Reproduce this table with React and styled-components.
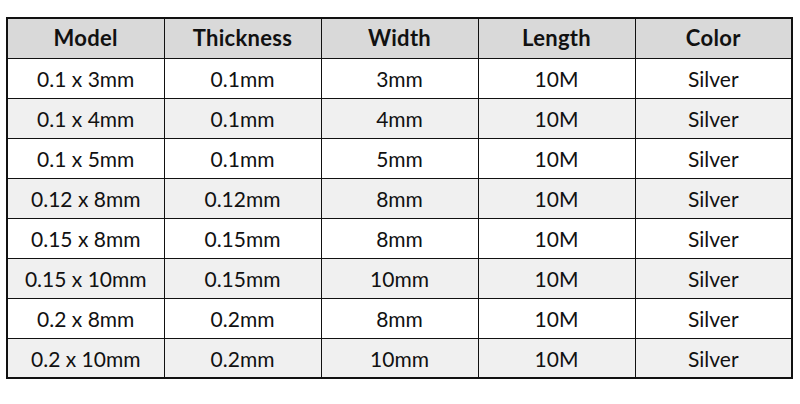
import React from "react";
import styled, { createGlobalStyle } from "styled-components";

const Global = createGlobalStyle`
  html, body { margin: 0; padding: 0; background: #fff; }
  body { font-family: "Lato", "Open Sans", sans-serif; color: #111; }
`;

const Page = styled.div`
  width: 800px;
  height: 404px;
  padding: 17px 0 0 6px;
  box-sizing: border-box;
`;

const Table = styled.table`
  border-collapse: collapse;
  width: 787px;
  border: 2px solid #111;
  table-layout: fixed;
`;

const HeadCell = styled.th`
  height: 40px;
  box-sizing: border-box;
  padding: 0 0 1px;
  line-height: 22px;
  background: #d9d9d9;
  border: 1px solid #111;
  font-weight: 700;
  font-size: 22px;
  letter-spacing: 0.3px;
  text-align: center;
  vertical-align: middle;
`;

const Row = styled.tr`
  background: ${(p) => (p.$alt ? "#f0f0f0" : "#ffffff")};
`;

const Cell = styled.td`
  height: 40px;
  box-sizing: border-box;
  padding: 2px 0 0;
  line-height: 22px;
  border: 1px solid #111;
  font-size: 21px;
  text-align: center;
  vertical-align: middle;
`;

const headers = ["Model", "Thickness", "Width", "Length", "Color"];
const rows = [
  ["0.1 x 3mm", "0.1mm", "3mm"],
  ["0.1 x 4mm", "0.1mm", "4mm"],
  ["0.1 x 5mm", "0.1mm", "5mm"],
  ["0.12 x 8mm", "0.12mm", "8mm"],
  ["0.15 x 8mm", "0.15mm", "8mm"],
  ["0.15 x 10mm", "0.15mm", "10mm"],
  ["0.2 x 8mm", "0.2mm", "8mm"],
  ["0.2 x 10mm", "0.2mm", "10mm"],
];

export default function App() {
  return (
    <Page>
      <Global />
      <Table>
        <thead>
          <tr>
            {headers.map((h) => (
              <HeadCell key={h}>{h}</HeadCell>
            ))}
          </tr>
        </thead>
        <tbody>
          {rows.map((r, i) => (
            <Row key={i} $alt={i % 2 === 1}>
              <Cell>{r[0]}</Cell>
              <Cell>{r[1]}</Cell>
              <Cell>{r[2]}</Cell>
              <Cell>10M</Cell>
              <Cell>Silver</Cell>
            </Row>
          ))}
        </tbody>
      </Table>
    </Page>
  );
}
